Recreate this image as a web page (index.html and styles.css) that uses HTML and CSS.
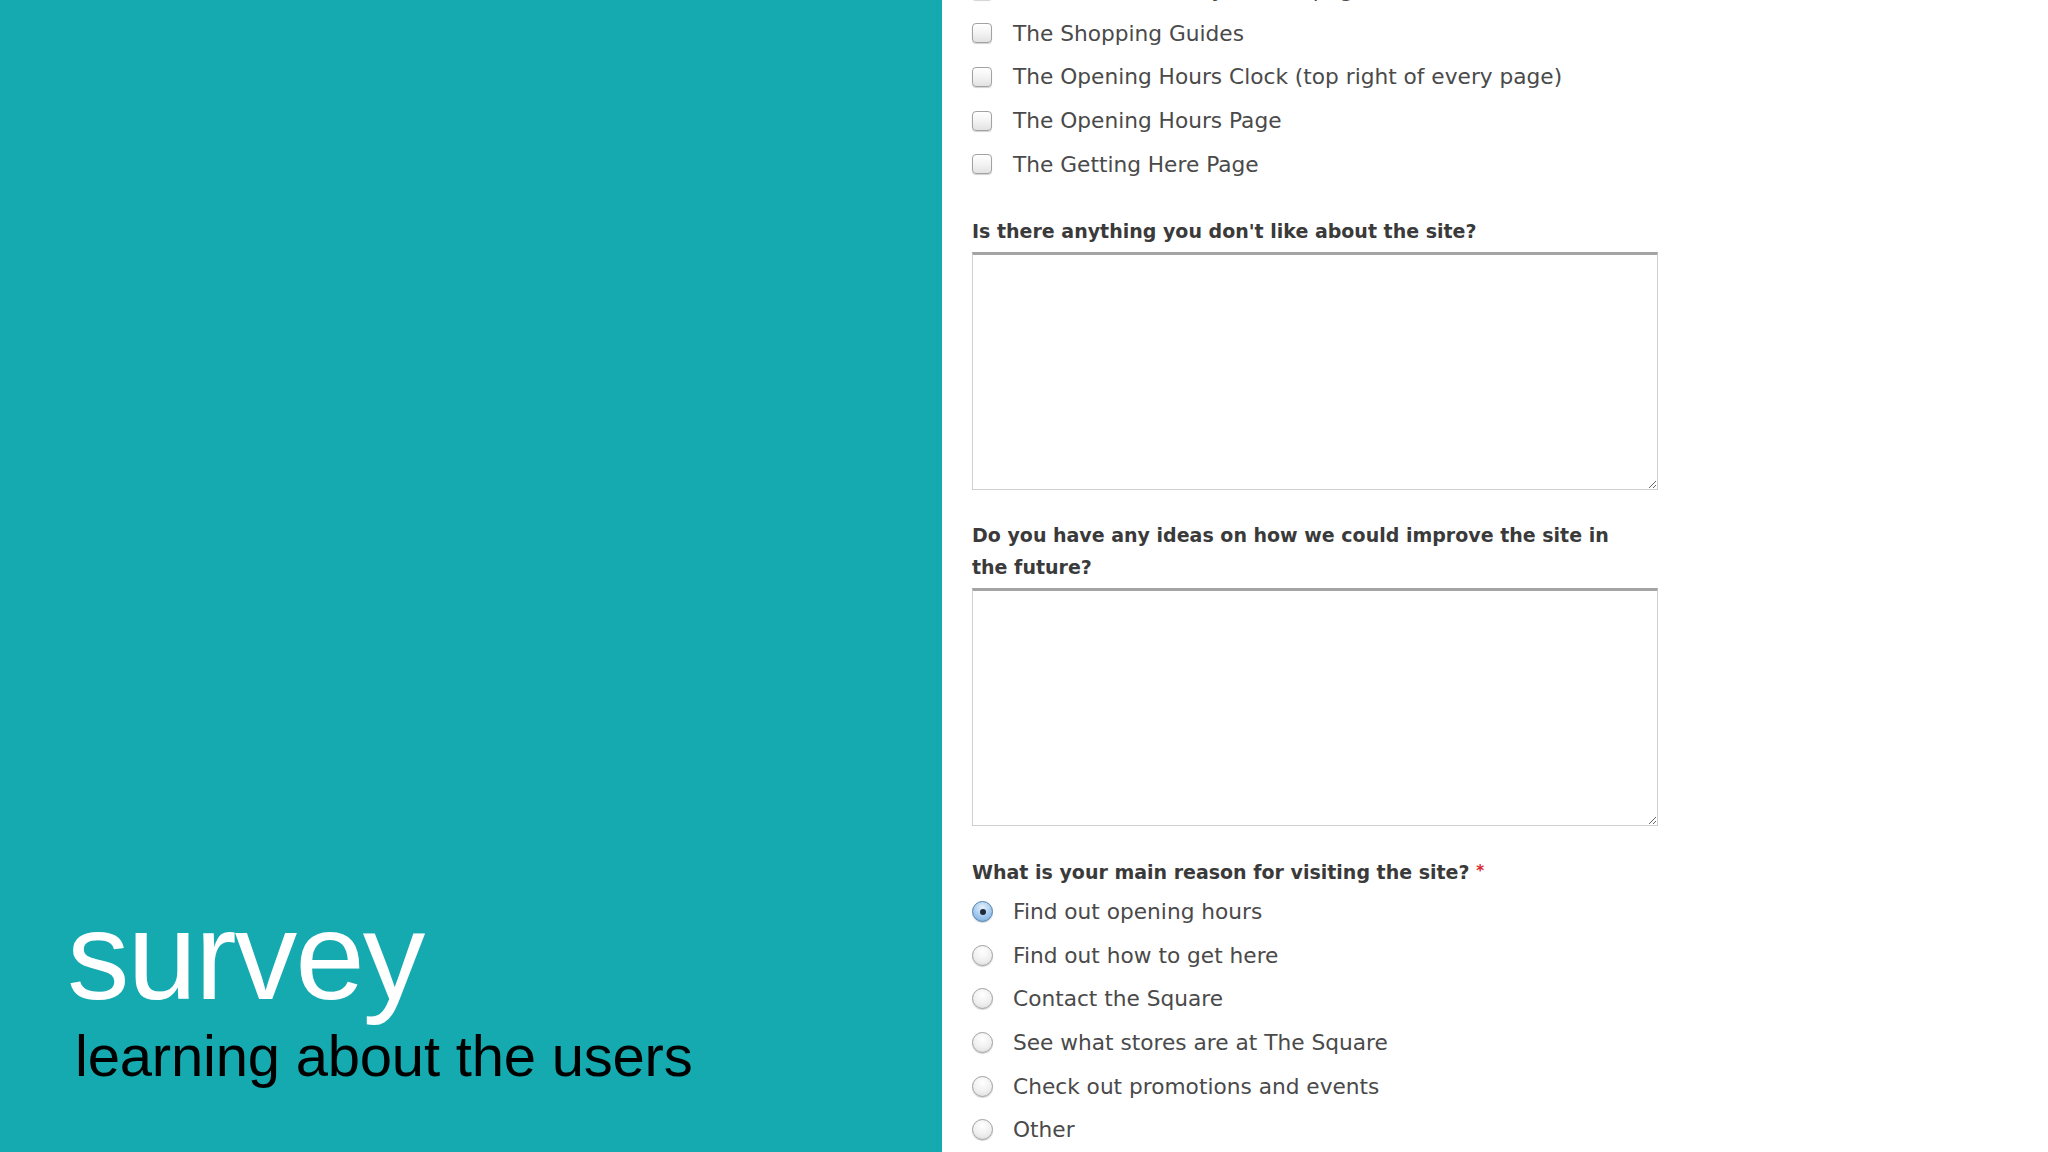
FILE: index.html
```html
<!DOCTYPE html>
<html lang="en">
<head>
<meta charset="utf-8">
<title>survey</title>
<link rel="stylesheet" href="styles.css">
</head>
<body>
<div class="slide">
  <aside class="panel">
    <div class="title-block">
      <div class="title">survey</div>
      <div class="subtitle">learning about the users</div>
    </div>
  </aside>
  <main class="form-area">
    <div class="form">
      <ul class="options">
        <li><span class="checkbox"></span><span class="opt-text">The Store Directory (stores page)</span></li>
        <li><span class="checkbox"></span><span class="opt-text">The Shopping Guides</span></li>
        <li><span class="checkbox"></span><span class="opt-text">The Opening Hours Clock (top right of every page)</span></li>
        <li><span class="checkbox"></span><span class="opt-text">The Opening Hours Page</span></li>
        <li><span class="checkbox"></span><span class="opt-text">The Getting Here Page</span></li>
      </ul>

      <label class="question">Is there anything you don't like about the site?</label>
      <textarea class="answer"></textarea>

      <label class="question">Do you have any ideas on how we could improve the site in the future?</label>
      <textarea class="answer"></textarea>

      <label class="question">What is your main reason for visiting the site? <span class="req">*</span></label>
      <ul class="options radios">
        <li><span class="radio checked"></span><span class="opt-text">Find out opening hours</span></li>
        <li><span class="radio"></span><span class="opt-text">Find out how to get here</span></li>
        <li><span class="radio"></span><span class="opt-text">Contact the Square</span></li>
        <li><span class="radio"></span><span class="opt-text">See what stores are at The Square</span></li>
        <li><span class="radio"></span><span class="opt-text">Check out promotions and events</span></li>
        <li><span class="radio"></span><span class="opt-text">Other</span></li>
      </ul>
    </div>
  </main>
</div>
</body>
</html>
```

FILE: styles.css
```css
* {
  box-sizing: border-box;
}

html, body {
  margin: 0;
  padding: 0;
  background: #ffffff;
}

.slide {
  display: flex;
  width: 2048px;
  height: 1152px;
  overflow: hidden;
}

.panel {
  flex: 0 0 942px;
  height: 100%;
  background: #15aaaf;
  display: flex;
  flex-direction: column;
  justify-content: flex-end;
  padding: 0 0 67px 67px;
  font-family: "Liberation Sans", Arial, sans-serif;
}

.title {
  color: #ffffff;
  font-size: 125px;
  line-height: 125px;
  letter-spacing: -2px;
}

.subtitle {
  color: #000000;
  font-size: 58px;
  line-height: 58px;
  margin: 9px 0 0 8px;
  letter-spacing: -0.2px;
}

.form-area {
  flex: 1 1 auto;
  height: 100%;
  overflow: hidden;
  background: #ffffff;
  padding-left: 30px;
  font-family: "DejaVu Sans", "Noto Sans", sans-serif;
}

.form {
  width: 686px;
  margin-top: -32px;
  display: flex;
  flex-direction: column;
}

.options {
  list-style: none;
  margin: 0;
  padding: 0;
}

.options li {
  height: 43.6px;
  display: flex;
  align-items: center;
  gap: 21px;
}

.opt-text {
  color: #4a4a4a;
  font-size: 21.7px;
  white-space: nowrap;
}

.checkbox {
  flex: 0 0 20px;
  width: 20px;
  height: 20px;
  border: 1px solid #a2a2a2;
  border-radius: 4px;
  background: linear-gradient(#ffffff, #f2f2f2 55%, #e2e2e2);
  box-shadow: 0 1px 1px rgba(0, 0, 0, 0.18);
}

.radio {
  flex: 0 0 21px;
  width: 21px;
  height: 21px;
  border: 1px solid #a0a0a0;
  border-radius: 50%;
  background: radial-gradient(circle at 50% 30%, #ffffff, #f0f0f0 55%, #d8d8d8);
  box-shadow: 0 1px 1px rgba(0, 0, 0, 0.18);
  display: flex;
  align-items: center;
  justify-content: center;
}

.radio.checked {
  border-color: #4f7fb0;
  background: radial-gradient(circle at 50% 30%, #e6f1fb, #a9cdee 50%, #6da6dc);
}

.radio.checked::after {
  content: "";
  width: 6px;
  height: 6px;
  border-radius: 50%;
  background: #1d2b3a;
}

.question {
  display: block;
  margin: 29px 0 5px;
  max-width: 660px;
  color: #3a3a3a;
  font-weight: bold;
  font-size: 19px;
  line-height: 32px;
}

.req {
  color: #d8262e;
  font-size: 15px;
  vertical-align: 3px;
}

.answer {
  display: block;
  width: 686px;
  height: 238px;
  margin: 0;
  padding: 4px;
  border: 1px solid #d0d0d0;
  border-top: 3px solid #a4a4a4;
  border-radius: 0;
  background: #ffffff;
  font-family: "DejaVu Sans", sans-serif;
  resize: both;
}

.radios {
  margin-top: -3px;
}

.radios li {
  gap: 20px;
}
```
